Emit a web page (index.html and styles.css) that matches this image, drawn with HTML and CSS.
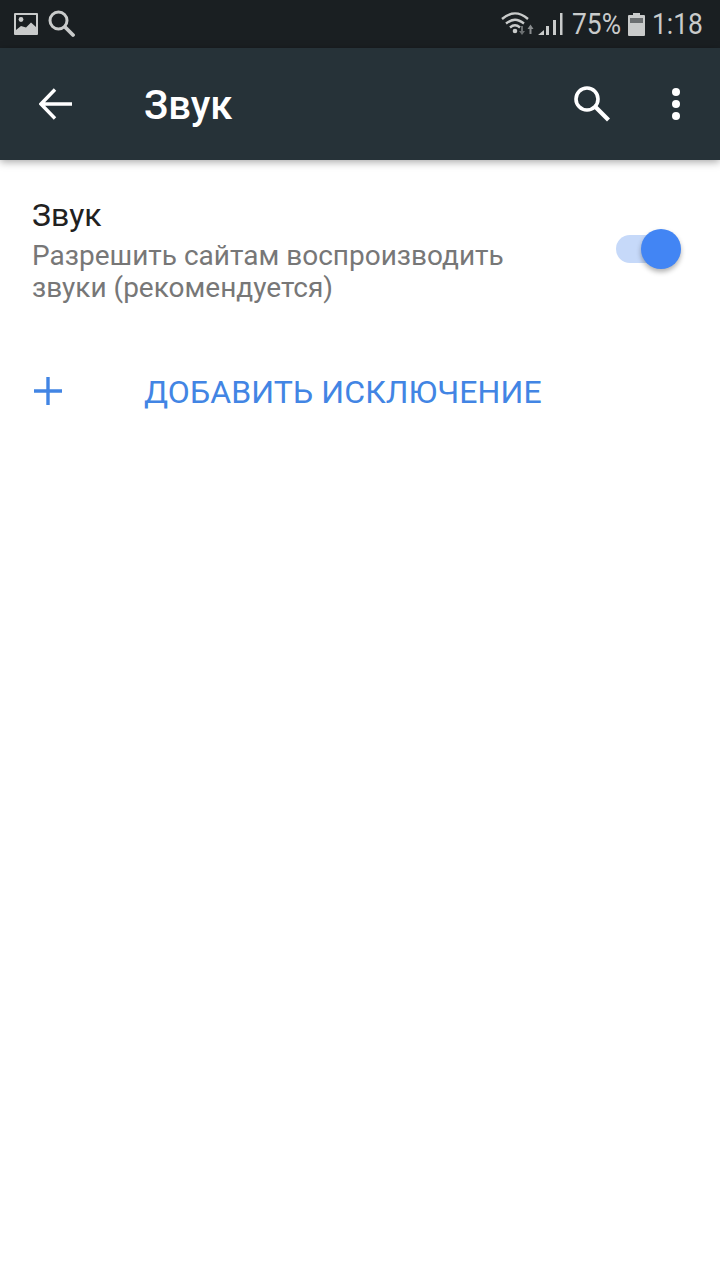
FILE: index.html
```html
<!DOCTYPE html>
<html>

	<head>
		<meta charset="utf-8" />
		<title>Звук</title>
		<link rel="stylesheet" href="styles.css">
	</head>

	<body>
		<div class="statusbar">
			<div class="status-left">
				<svg class="ic-picture" width="26" height="24" viewBox="0 0 26 24">
					<path fill="#c9cbcb" fill-rule="evenodd" d="M2 1h22a1 1 0 0 1 1 1v20a1 1 0 0 1-1 1H2a1 1 0 0 1-1-1V2a1 1 0 0 1 1-1zm1 2v15l5-4 5 1.500 5-5 5 4.500V3z" />
					<circle cx="8" cy="7.500" r="2.400" fill="#c9cbcb" />
				</svg>
				<svg class="ic-lens" width="28" height="28" viewBox="0 0 28 28">
					<circle cx="11.500" cy="10.500" r="8.500" fill="none" stroke="#c9cbcb" stroke-width="3" />
					<path d="M18 17l8 8" stroke="#c9cbcb" stroke-width="3.800" stroke-linecap="round" />
				</svg>
			</div>
			<div class="status-right">
				<svg class="ic-wifi" width="36" height="26" viewBox="0 0 36 26">
					<path d="M2 8C11 .5 19 .5 28 8M6 12.500c6.500-5 11.500-5 18 0M10 16.500c3.500-3 6.500-3 10 0" fill="none" stroke="#c9cbcb" stroke-width="2.400" />
					<circle cx="15" cy="20" r="2.300" fill="#c9cbcb" />
					<path d="M19 20h2v-5h2v5h2l-3 4z" fill="#6b6f71" />
					<path d="M29.500 17h2v6h-2zM27.500 18l3-4.500 3 4.500z" fill="#8a8d8f" />
				</svg>
				<svg class="ic-signal" width="26" height="24" viewBox="0 0 26 24">
					<path fill="#c9cbcb" d="M0 23l6-5v5zM8 14h3v9H8zM15 8h3v15h-3zM22 1h2.500v22H22z" />
				</svg>
				<span class="status-text percent">75%</span>
				<svg class="ic-battery" width="17" height="24" viewBox="0 0 17 24">
					<path fill="#c9cbcb" d="M5 1h7v2h4a1 1 0 0 1 1 1v19a1 1 0 0 1-1 1H1a1 1 0 0 1-1-1V4a1 1 0 0 1 1-1h4z" />
					<rect x="2" y="6" width="13" height="5" fill="#6b6f71" />
				</svg>
				<span class="status-text time">1:18</span>
			</div>
		</div>

		<div class="toolbar">
			<svg class="back" width="34" height="32" viewBox="0 0 34 32">
				<path d="M33 16H3M16 1.500L2 16l14 14.500" fill="none" stroke="#fff" stroke-width="3.400" />
			</svg>
			<div class="title">Звук</div>
			<svg class="search" width="36" height="36" viewBox="0 0 36 36">
				<circle cx="13" cy="13" r="11" fill="none" stroke="#fff" stroke-width="3.600" />
				<path d="M21.500 21l13 13" stroke="#fff" stroke-width="4.200" />
			</svg>
			<div class="more"><i></i><i></i><i></i></div>
		</div>

		<div class="content">
			<div class="setting">
				<div class="setting-text">
					<div class="setting-title">Звук</div>
					<div class="setting-desc">Разрешить сайтам воспроизводить звуки (рекомендуется)</div>
				</div>
				<div class="switch">
					<div class="switch-thumb"></div>
				</div>
			</div>
			<div class="add-row">
				<svg class="plus" width="31" height="28" viewBox="0 0 31 28">
					<path d="M16 0v28M2 14h28" stroke="#4285e4" stroke-width="3.400" />
				</svg>
				<div class="add-label">ДОБАВИТЬ ИСКЛЮЧЕНИЕ</div>
			</div>
		</div>
	</body>

</html>
```

FILE: styles.css
```css
* {
	padding: 0;
	margin: 0;
	box-sizing: border-box;
}

html,
body {
	height: 100%;
}

body {
	background: #fff;
	font-family: Roboto, "Noto Sans", sans-serif;
}

svg {
	display: block;
	flex: none;
}

.statusbar {
	height: 48px;
	background: #1a1f22;
	display: flex;
	justify-content: space-between;
	align-items: center;
	padding: 0 16px 0 13px;
}

.status-left,
.status-right {
	display: flex;
	align-items: center;
}

.status-left {
	gap: 8px;
}

.status-right {
	color: #c9cbcb;
}

.ic-signal {
	margin-left: 2px;
}

.status-text {
	display: block;
	font-size: 30px;
	line-height: 48px;
	white-space: nowrap;
	transform: scaleX(0.88);
	transform-origin: left center;
}

.percent {
	width: 48px;
	margin-left: 8px;
}

.ic-battery {
	margin-left: 8px;
}

.time {
	width: 52px;
	margin-left: 7px;
}

.toolbar {
	height: 112px;
	background: #263238;
	display: flex;
	align-items: center;
	padding: 0 40px 0 39px;
	box-shadow: 0 2px 8px rgba(0, 0, 0, 0.35);
	position: relative;
}

.title {
	font-size: 40px;
	font-weight: 500;
	color: #fff;
	margin-left: 71px;
	margin-top: 3px;
	flex: 1;
}

.search {
	margin-right: 62px;
}

.more {
	display: flex;
	flex-direction: column;
	gap: 4px;
}

.more i {
	display: block;
	width: 8px;
	height: 8px;
	border-radius: 50%;
	background: #fff;
}

.content {
	padding: 0 32px;
}

.setting {
	display: flex;
	align-items: center;
	justify-content: space-between;
	padding-top: 36px;
}

.setting-text {
	width: 500px;
}

.setting-title {
	font-size: 32px;
	line-height: 38px;
	color: #212121;
}

.setting-desc {
	font-size: 28px;
	line-height: 32px;
	color: #777;
	margin-top: 6px;
}

.switch {
	width: 60px;
	height: 28px;
	border-radius: 14px;
	background: #c6d9f9;
	position: relative;
	margin-right: 12px;
	margin-top: -3px;
}

.switch-thumb {
	width: 40px;
	height: 40px;
	border-radius: 50%;
	background: #4285f4;
	position: absolute;
	right: -5px;
	top: -6px;
	box-shadow: 0 3px 5px rgba(0, 0, 0, 0.3);
}

.add-row {
	display: flex;
	align-items: center;
	margin-top: 64px;
}

.plus {
	margin-bottom: 2px;
}

.add-label {
	font-size: 32px;
	letter-spacing: 0.1px;
	line-height: 48px;
	color: #4285e4;
	margin-left: 81px;
}
```
